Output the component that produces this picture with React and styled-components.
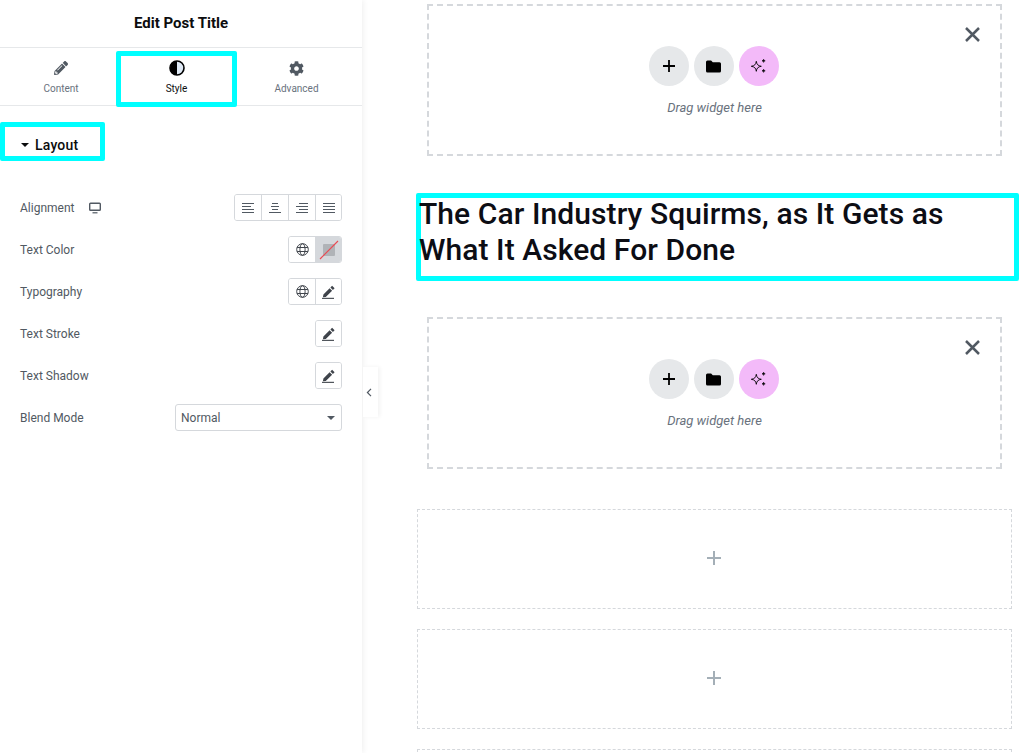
import React from "react";
import styled, { createGlobalStyle } from "styled-components";

const Global = createGlobalStyle`
  html, body { margin: 0; padding: 0; background: #fff; height: 100%; overflow: hidden; }
  body { font-family: Roboto, "Liberation Sans", sans-serif; }
`;
const Page = styled.div`display: flex; width: 1035px; height: 753px; overflow: hidden; position: relative;`;
const Panel = styled.aside`
  width: 362px; flex: none; height: 753px; background: #fff; box-shadow: 1px 0 6px rgba(0,0,0,.07);
  position: relative; z-index: 1;
`;
const PanelHeader = styled.header`
  height: 48px; display: flex; align-items: center; justify-content: center; padding-bottom: 2px; box-sizing: border-box;
  border-bottom: 1px solid #e6e8ea; font-size: 15px; font-weight: 700; color: #0c0d0e;
`;
const Tabs = styled.nav`
  display: grid; grid-template-columns: 110px 121px 119px; padding-left: 6px; height: 57px;
  border-bottom: 1px solid #e6e8ea;
`;
const Tab = styled.div`
  display: flex; flex-direction: column; align-items: center; position: relative; padding-top: 12px;
  box-sizing: border-box; height: 57px; gap: 6px;
  font-size: 10px; line-height: 13px; color: ${p => (p.$active ? "#0c0d0e" : "#69727d")};
  ${p => p.$active && `outline: 5px solid #00ffff; outline-offset: -5px; height: 56px; margin-top: 3px; padding-top: 9px; border-radius: 2px; z-index:1;`}
`;
const TabIcon = styled.span`display: flex; height: 16px; align-items: center; color: #515962;`;
const SectionHead = styled.div`
  width: 105px; height: 39px; margin-top: 16px; box-sizing: border-box;
  border: 5px solid #00ffff; border-radius: 2px; display: flex; align-items: center; gap: 6px;
  padding: 7px 0 0 16px; font-size: 14px; font-weight: 500; color: #0c0d0e; letter-spacing: .2px;
`;
const Caret = styled.i`
  width: 0; height: 0; border-left: 4px solid transparent; border-right: 4px solid transparent;
  border-top: 4px solid ${p => p.$c || "#0c0d0e"}; display: block;
`;
const Controls = styled.div`padding: 33px 20px 0; display: flex; flex-direction: column; gap: 15px;`;
const Row = styled.div`display: flex; align-items: center; justify-content: space-between; height: 27px;`;
const Label = styled.label`font-size: 12px; color: #515962; display: flex; align-items: center; gap: 15px;`;
const Group = styled.div`
  display: flex; border: 1px solid #d5d8dc; border-radius: 3px; height: 27px; box-sizing: border-box; overflow: hidden;
`;
const Btn = styled.div`
  width: 27px; display: flex; align-items: center; justify-content: center; color: #515962;
  box-sizing: border-box; background: ${p => (p.$fill ? "#d5d8dc" : "#fff")};
  &:first-child, &:last-child { width: 26px; }
  &:only-child { width: 25px; }
  & + & { border-left: 1px solid #d5d8dc; }
`;
const Select = styled.div`
  width: 167px; height: 27px; box-sizing: border-box; border: 1px solid #d5d8dc; border-radius: 3px;
  display: flex; align-items: center; justify-content: space-between; padding: 0 6px 0 5px;
  font-size: 12px; color: #515962;
`;
const Toggle = styled.div`
  position: absolute; left: 363px; top: 367px; width: 15px; height: 50px; background: #fff; z-index: 2; box-sizing: border-box;
  display: flex; align-items: center; justify-content: center; padding-right: 3px; box-shadow: 2px 0 4px rgba(0,0,0,.05);
`;
const Canvas = styled.main`flex: 1; padding: 4px 0 0 55px; display: flex; flex-direction: column; align-items: flex-start;`;
const DropBox = styled.section`
  width: 575px; height: 152px; margin-left: 10px; box-sizing: border-box; border: 2px dashed #d5d8dc; position: relative;
  display: flex; flex-direction: column; align-items: center; padding-top: 40px; flex: none;
  margin-top: ${p => p.$mt || 0}px;
`;
const Close = styled.span`position: absolute; right: 20px; top: 21px; display: flex; color: #515962;`;
const Circles = styled.div`display: flex; gap: 5px; margin-left: -2px;`;
const Circle = styled.div`
  width: 40px; height: 40px; border-radius: 50%; background: ${p => p.$bg || "#e6e8ea"};
  display: flex; align-items: center; justify-content: center; color: #000;
`;
const Hint = styled.p`margin: 14px 0 0; font-size: 13px; line-height: 16px; font-style: italic; color: #69727d;`;
const Heading = styled.h1`
  width: 603px; height: 88px; margin: 37px 0 0 -1px; box-sizing: border-box; flex: none;
  border: 5px solid #00ffff; border-radius: 2px; font-size: 30px; line-height: 36px; font-weight: 500;
  color: #0c0d14; letter-spacing: .08px;
`;
const HeadingInner = styled.span`display: block; margin: -2px 0 0 -2px;`;
const Empty = styled.section`
  width: 595px; height: 100px; flex: none; box-sizing: border-box; border: 1px dashed #d5d8dc;
  display: flex; align-items: center; justify-content: center; color: #a4afb7; padding: 0 1px 2px 0;
  margin-top: ${p => p.$mt}px;
`;

const Pencil = () => (
  <svg width="14" height="14" viewBox="0 0 512 512" fill="currentColor"><path d="M497.9 142.1l-46.1 46.1c-4.7 4.7-12.3 4.7-17 0l-111-111c-4.7-4.7-4.7-12.3 0-17l46.1-46.1c18.7-18.7 49.1-18.7 67.9 0l60.1 60.1c18.8 18.7 18.8 49.1 0 67.9zM284.2 99.8L21.6 362.4.4 483.9c-2.9 16.4 11.4 30.6 27.8 27.8l121.5-21.3 262.6-262.6c4.7-4.7 4.7-12.3 0-17l-111-111c-4.8-4.7-12.4-4.7-17.1 0zM124.1 339.9c-5.5-5.5-5.5-14.3 0-19.8l154-154c5.5-5.5 14.3-5.5 19.8 0s5.5 14.3 0 19.8l-154 154c-5.5 5.5-14.3 5.5-19.8 0zM88 424h48v36.3l-64.5 11.3-31.1-31.1L51.7 376H88v48z" fillRule="evenodd"/></svg>
);
const Half = () => (
  <svg width="16" height="16" viewBox="0 0 16 16"><circle cx="8" cy="8" r="7" fill="#dfe9f5" stroke="#000" strokeWidth="1.6"/><path d="M8 1a7 7 0 0 0 0 14z" fill="#000"/></svg>
);
const Cog = () => (
  <svg width="15" height="15" viewBox="0 0 512 512" fill="currentColor"><path d="M487.4 315.7l-42.6-24.6c4.3-23.2 4.3-47 0-70.2l42.6-24.6c4.9-2.8 7.1-8.6 5.5-14-11.1-35.6-30-67.8-54.7-94.6-3.8-4.1-10-5.1-14.8-2.3L380.8 110c-17.9-15.4-38.5-27.3-60.8-35.1V25.8c0-5.6-3.9-10.5-9.4-11.7-36.7-8.2-74.3-7.8-109.2 0-5.5 1.2-9.4 6.1-9.4 11.7V75c-22.2 7.9-42.8 19.8-60.8 35.1L88.7 85.5c-4.9-2.8-11-1.9-14.8 2.3-24.7 26.7-43.6 58.9-54.7 94.6-1.7 5.4.6 11.2 5.5 14L67.3 221c-4.3 23.2-4.3 47 0 70.2l-42.6 24.6c-4.9 2.8-7.1 8.6-5.5 14 11.1 35.6 30 67.8 54.7 94.6 3.8 4.1 10 5.1 14.8 2.3l42.6-24.6c17.9 15.4 38.5 27.3 60.8 35.1v49.2c0 5.6 3.9 10.5 9.4 11.7 36.7 8.2 74.3 7.8 109.2 0 5.5-1.2 9.4-6.1 9.4-11.7v-49.2c22.2-7.9 42.8-19.8 60.8-35.1l42.6 24.6c4.9 2.8 11 1.9 14.8-2.3 24.7-26.7 43.6-58.9 54.7-94.6 1.5-5.5-.7-11.3-5.6-14.1zM256 336c-44.1 0-80-35.9-80-80s35.9-80 80-80 80 35.9 80 80-35.9 80-80 80z"/></svg>
);
const Monitor = () => (
  <svg width="12" height="12" viewBox="0 0 12 12" fill="none" stroke="currentColor"><rect x=".7" y="1.2" width="10.6" height="7" rx=".8" strokeWidth="1.4"/><path d="M3.5 10.8h5" strokeWidth="1.2"/></svg>
);
const Lines = ({ widths, anchor }) => (
  <svg width="12" height="10" viewBox="0 0 12 10" stroke="currentColor" strokeWidth="1">
    {widths.map((w, i) => {
      const x = anchor === "l" ? 0 : anchor === "r" ? 12 - w : (12 - w) / 2;
      return <path key={i} d={`M${x} ${i * 3 + .5}h${w}`} />;
    })}
  </svg>
);
const Globe = () => (
  <svg width="13" height="13" viewBox="0 0 13 13" fill="none" stroke="#3f444b" strokeWidth="1"><circle cx="6.5" cy="6.5" r="5.8"/><ellipse cx="6.5" cy="6.5" rx="2.6" ry="5.8"/><path d="M1.1 4.5h10.8M1.1 8.5h10.8"/></svg>
);
const Edit = () => (
  <svg width="13" height="14" viewBox="0 0 13 14" fill="#3f444b"><path d="M1.4 9.6 7.6 3.3l2.5 2.5-6.3 6.2-2.9.2zM8.4 2.5 10.1.8l2.5 2.5-1.7 1.7z"/><rect x="0" y="12.8" width="12" height="1.1"/></svg>
);
const NoColor = () => (
  <svg width="20" height="20" viewBox="0 0 20 20"><rect x="4" y="4" width="12" height="12" rx="1" fill="#b0b3b7"/><path d="M1 19 19 1" stroke="#ea4a52" strokeWidth="1.1"/></svg>
);
const Plus = ({ size = 12, w = 1.6 }) => (
  <svg width={size} height={size} viewBox={`0 0 ${size} ${size}`} stroke="currentColor" strokeWidth={w}><path d={`M${size / 2} 0v${size}M0 ${size / 2}h${size}`}/></svg>
);
const Folder = () => (
  <svg width="15" height="13" viewBox="0 0 15 13" fill="currentColor"><path d="M0 2a1.5 1.5 0 0 1 1.5-1.5h3.6L6.8 2.2h6.7A1.5 1.5 0 0 1 15 3.7v7.3a1.5 1.5 0 0 1-1.5 1.5h-12A1.5 1.5 0 0 1 0 11z"/></svg>
);
const Sparkle = () => (
  <svg width="15" height="15" viewBox="0 0 15 15" fill="none" stroke="#000"><path d="M5.3 2.3C5.8 5.5 7 6.8 10.3 7.3 7 7.8 5.8 9 5.3 12.3 4.8 9 3.6 7.8.3 7.3 3.6 6.8 4.8 5.5 5.3 2.3z" strokeWidth=".9"/><path d="M12.6.2c.2 1 .6 1.4 1.6 1.6-1 .2-1.4.6-1.6 1.6-.2-1-.6-1.4-1.6-1.6 1-.2 1.4-.6 1.6-1.6zM12.6 10.2c.2 1 .6 1.4 1.6 1.6-1 .2-1.4.6-1.6 1.6-.2-1-.6-1.4-1.6-1.6 1-.2 1.4-.6 1.6-1.6z" fill="#000" strokeWidth=".6"/></svg>
);
const X = () => (
  <svg width="15" height="15" viewBox="0 0 15 15" stroke="currentColor" strokeWidth="2.5"><path d="M1 1l13 13M14 1 1 14"/></svg>
);
const Chevron = () => (
  <svg width="6" height="9" viewBox="0 0 6 9" fill="none" stroke="#515962" strokeWidth="1.2"><path d="M5 .8 1.4 4.5 5 8.2"/></svg>
);

const Drop = ({ mt }) => (
  <DropBox $mt={mt}>
    <Close><X /></Close>
    <Circles>
      <Circle><Plus size={12} w={1.8} /></Circle>
      <Circle><Folder /></Circle>
      <Circle $bg="#f3baf9"><Sparkle /></Circle>
    </Circles>
    <Hint>Drag widget here</Hint>
  </DropBox>
);

export default function App() {
  return (
    <Page>
      <Global />
      <Panel>
        <PanelHeader>Edit Post Title</PanelHeader>
        <Tabs>
          <Tab><TabIcon><Pencil /></TabIcon>Content</Tab>
          <Tab $active><TabIcon><Half /></TabIcon>Style</Tab>
          <Tab><TabIcon><Cog /></TabIcon>Advanced</Tab>
        </Tabs>
        <SectionHead><Caret />Layout</SectionHead>
        <Controls>
          <Row>
            <Label>Alignment <Monitor /></Label>
            <Group>
              <Btn><Lines anchor="l" widths={[12, 9, 12, 12]} /></Btn>
              <Btn><Lines anchor="c" widths={[6, 8, 6, 12]} /></Btn>
              <Btn><Lines anchor="r" widths={[9, 12, 9, 12]} /></Btn>
              <Btn><Lines anchor="l" widths={[12, 12, 12, 12]} /></Btn>
            </Group>
          </Row>
          <Row>
            <Label>Text Color</Label>
            <Group><Btn><Globe /></Btn><Btn $fill><NoColor /></Btn></Group>
          </Row>
          <Row>
            <Label>Typography</Label>
            <Group><Btn><Globe /></Btn><Btn><Edit /></Btn></Group>
          </Row>
          <Row>
            <Label>Text Stroke</Label>
            <Group><Btn><Edit /></Btn></Group>
          </Row>
          <Row>
            <Label>Text Shadow</Label>
            <Group><Btn><Edit /></Btn></Group>
          </Row>
          <Row>
            <Label>Blend Mode</Label>
            <Select>Normal<Caret $c="#515962" /></Select>
          </Row>
        </Controls>
      </Panel>
      <Toggle><Chevron /></Toggle>
      <Canvas>
        <Drop />
        <Heading><HeadingInner>The Car Industry Squirms, as It Gets as What It Asked For Done</HeadingInner></Heading>
        <Drop mt={36} />
        <Empty $mt={40}><Plus size={14} w={2} /></Empty>
        <Empty $mt={20}><Plus size={14} w={2} /></Empty>
        <Empty $mt={20} />
      </Canvas>
    </Page>
  );
}
